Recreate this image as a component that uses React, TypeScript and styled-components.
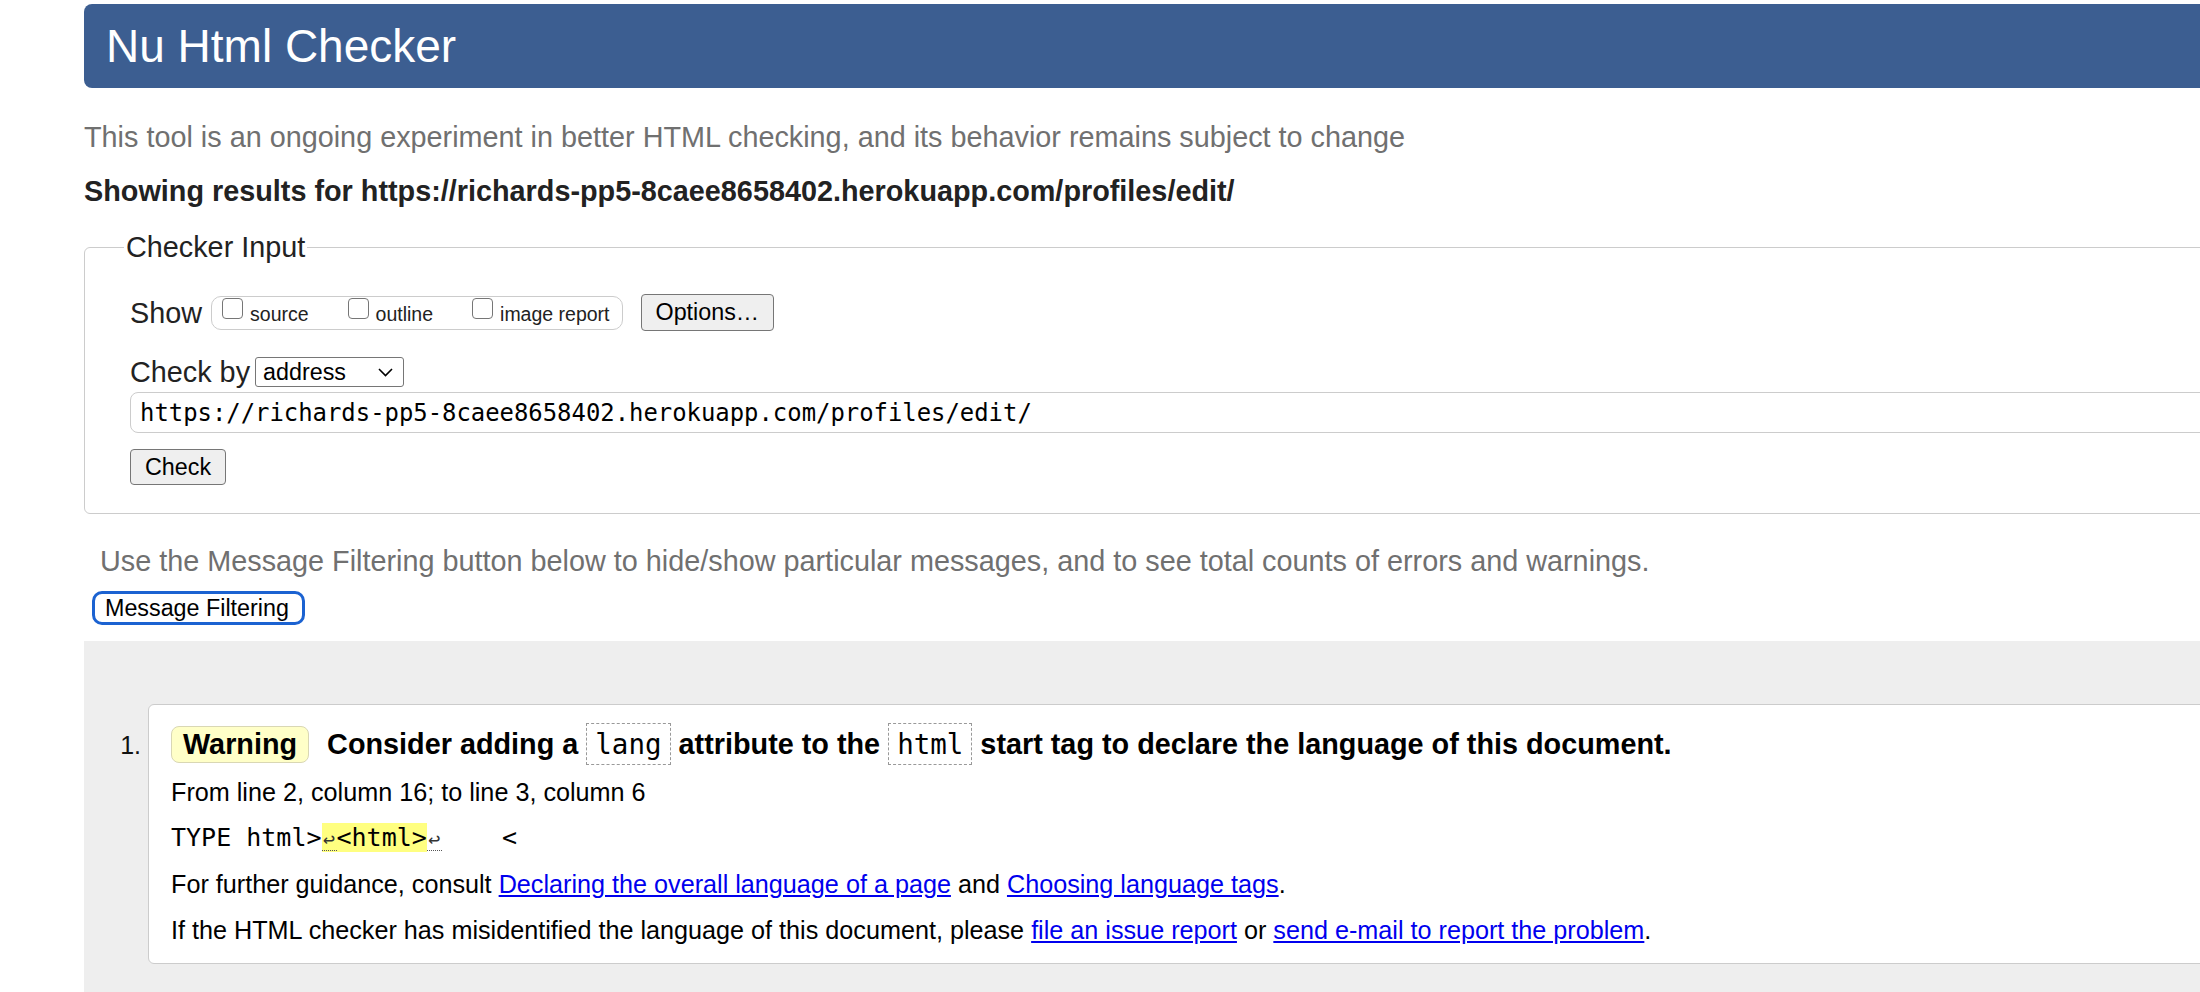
import React from "react";
import styled, { createGlobalStyle } from "styled-components";

const GlobalStyle = createGlobalStyle`
  html, body {
    margin: 0;
    padding: 0;
    overflow: hidden;
    background: #ffffff;
  }
  body {
    font-family: "Liberation Sans", Arial, Helvetica, sans-serif;
    color: #222222;
  }
`;

const SANS = `"Liberation Sans", Arial, Helvetica, sans-serif`;
const MONO = `"DejaVu Sans Mono", Menlo, "Liberation Mono", monospace`;

const Page = styled.div`
  width: 2400px;
  box-sizing: border-box;
  padding: 4px 0 0 84px;
`;

const Header = styled.header`
  height: 84px;
  box-sizing: border-box;
  background: #3c5e91;
  border-radius: 8px;
  display: flex;
  align-items: center;
  padding-left: 22px;
`;

const Title = styled.h1`
  margin: 0;
  font-family: ${SANS};
  font-size: 46px;
  line-height: 46px;
  font-weight: normal;
  color: #ffffff;
`;

const Lead = styled.p<{ $mt: number; $ml?: number }>`
  margin: ${(p) => p.$mt}px 0 0 ${(p) => p.$ml ?? 0}px;
  font-size: 28.8px;
  line-height: 36px;
  color: #707070;
`;

const ResultsFor = styled.h2`
  margin: 18px 0 0;
  font-size: 28.8px;
  line-height: 36px;
  font-weight: bold;
  color: #222222;
`;

const Fieldset = styled.fieldset`
  margin: 20px 0 0;
  border: 1px solid #cccccc;
  border-radius: 6px;
  padding: 29px 0 28px 45px;
  min-width: 0;
`;

const Legend = styled.legend`
  font-size: 28.8px;
  line-height: 36px;
  padding: 0 2px;
  margin-left: -6px;
  color: #222222;
`;

const Row = styled.div<{ $mt?: number }>`
  display: flex;
  align-items: center;
  height: ${(p) => (p.$mt ? 36 : 37)}px;
  margin-top: ${(p) => p.$mt ?? 0}px;
`;

const RowLabel = styled.span`
  font-size: 28.8px;
  line-height: 36px;
  color: #222222;
`;

const CheckGroup = styled.div`
  display: flex;
  align-items: flex-start;
  box-sizing: border-box;
  height: 34px;
  margin-left: 9px;
  padding: 1px 12px 0 10px;
  border: 1px solid #cccccc;
  border-radius: 10px;
  gap: 39px;
`;

const CheckItem = styled.label`
  display: flex;
  align-items: flex-start;
  gap: 7px;
`;

const Box = styled.input`
  appearance: none;
  -webkit-appearance: none;
  width: 21px;
  height: 21px;
  margin: 0;
  box-sizing: border-box;
  border: 1.5px solid #767676;
  border-radius: 4px;
  background: #ffffff;
`;

const CheckText = styled.span`
  font-size: 19.5px;
  line-height: 24px;
  padding-top: 4px;
  color: #222222;
`;

const Button = styled.button<{ $h: number; $ml?: number; $mt?: number }>`
  display: block;
  height: ${(p) => p.$h}px;
  margin: ${(p) => p.$mt ?? 0}px 0 0 ${(p) => p.$ml ?? 0}px;
  padding: 0 14px;
  box-sizing: border-box;
  font-family: ${SANS};
  font-size: 23.3px;
  color: #000000;
  background: #efefef;
  border: 1px solid #767676;
  border-radius: 4px;
`;

const SelectWrap = styled.div`
  position: relative;
  margin-left: 5px;
  width: 149px;
  height: 30px;
`;

const Select = styled.select`
  appearance: none;
  -webkit-appearance: none;
  width: 149px;
  height: 30px;
  box-sizing: border-box;
  padding: 0 0 0 7px;
  font-family: ${SANS};
  font-size: 23.3px;
  color: #000000;
  background: #ffffff;
  border: 1px solid #767676;
  border-radius: 3px;
`;

const Chevron = styled.svg`
  position: absolute;
  right: 11px;
  top: 11px;
  pointer-events: none;
`;

const UrlInput = styled.input`
  display: block;
  width: 100%;
  height: 41px;
  margin-top: 2px;
  box-sizing: border-box;
  padding: 0 9px;
  font-family: ${MONO};
  font-size: 23.9px;
  color: #000000;
  border: 1px solid #cccccc;
  border-radius: 8px;
  background: #ffffff;
`;

const FilterButton = styled.button`
  display: block;
  height: 34px;
  margin: 12px 0 0 8px;
  padding: 0 13px 0 10px;
  box-sizing: border-box;
  font-family: ${SANS};
  font-size: 23.3px;
  color: #000000;
  background: #ffffff;
  border: 3px solid #1b62d1;
  border-radius: 10px;
`;

const Results = styled.div`
  margin-top: 16px;
  background: #eeeeee;
  padding: 63px 0 200px 64px;
`;

const List = styled.ol`
  margin: 0;
  padding: 0;
  list-style: decimal outside;
`;

const Message = styled.li`
  background: #ffffff;
  border: 1px solid #cccccc;
  border-radius: 6px;
  padding: 17px 0 18px 22px;
  font-size: 25.2px;
  color: #000000;

  &::marker {
    font-size: 25px;
    color: #111111;
  }
`;

const MessageTitle = styled.p`
  margin: 0;
  font-size: 28.8px;
  line-height: 44px;
  font-weight: bold;
  color: #000000;
`;

const Badge = styled.span`
  display: inline-block;
  line-height: 35px;
  padding: 0 11px;
  margin-right: 10px;
  border: 1px solid #d9d7b4;
  border-radius: 8px;
  background: #ffffc8;
`;

const Code = styled.code`
  display: inline-block;
  font-family: ${MONO};
  font-size: 27.5px;
  font-weight: normal;
  line-height: 40px;
  padding: 0 8px;
  border: 1px dashed #999999;
`;

const Detail = styled.p<{ $mt: number }>`
  margin: ${(p) => p.$mt}px 0 0;
  font-size: 25.2px;
  line-height: 30px;
`;

const Extract = styled.p`
  margin: 16px 0 0;
  font-family: ${MONO};
  font-size: 25px;
  line-height: 30px;
  white-space: pre;
`;

const Highlight = styled.mark`
  background: #ffff80;
  color: #000000;
`;

const Newline = styled.span`
  display: inline-block;
  width: 15px;
  text-align: center;
  font-size: 20px;
  line-height: 22px;
  color: #333333;
  border-bottom: 1px dotted #555555;
`;

const Link = styled.a`
  color: #0000ee;
  text-decoration: underline;
`;

export default function App() {
  return (
    <>
      <GlobalStyle />
      <Page>
        <Header>
          <Title>Nu Html Checker</Title>
        </Header>
        <Lead $mt={31}>
          This tool is an ongoing experiment in better HTML checking, and its behavior remains subject to change
        </Lead>
        <ResultsFor>
          Showing results for https://richards-pp5-8caee8658402.herokuapp.com/profiles/edit/
        </ResultsFor>
        <Fieldset>
          <Legend>Checker Input</Legend>
          <Row>
            <RowLabel>Show</RowLabel>
            <CheckGroup>
              <CheckItem>
                <Box type="checkbox" />
                <CheckText>source</CheckText>
              </CheckItem>
              <CheckItem>
                <Box type="checkbox" />
                <CheckText>outline</CheckText>
              </CheckItem>
              <CheckItem>
                <Box type="checkbox" />
                <CheckText>image report</CheckText>
              </CheckItem>
            </CheckGroup>
            <Button type="button" $h={37} $ml={18}>
              Options…
            </Button>
          </Row>
          <Row $mt={23}>
            <RowLabel>Check by</RowLabel>
            <SelectWrap>
              <Select defaultValue="address">
                <option value="address">address</option>
                <option value="file">file upload</option>
                <option value="text">text input</option>
              </Select>
              <Chevron width="15" height="9" viewBox="0 0 15 9">
                <path d="M1 1 L7.5 7.5 L14 1" fill="none" stroke="#000" strokeWidth="1.6" />
              </Chevron>
            </SelectWrap>
          </Row>
          <UrlInput
            type="text"
            readOnly
            value="https://richards-pp5-8caee8658402.herokuapp.com/profiles/edit/"
          />
          <Button type="button" $h={36} $mt={16}>
            Check
          </Button>
        </Fieldset>
        <Lead $mt={29} $ml={16}>
          Use the Message Filtering button below to hide/show particular messages, and to see total counts of errors and warnings.
        </Lead>
        <FilterButton type="button">Message Filtering</FilterButton>
        <Results>
          <List>
            <Message>
              <MessageTitle>
                <Badge>Warning</Badge> Consider adding a <Code>lang</Code> attribute to the <Code>html</Code> start
                tag to declare the language of this document.
              </MessageTitle>
              <Detail $mt={11}>From line 2, column 16; to line 3, column 6</Detail>
              <Extract>
                {"TYPE html>"}
                <Highlight>
                  <Newline>↩</Newline>
                  {"<html>"}
                </Highlight>
                <Newline>↩</Newline>
                {"    <"}
              </Extract>
              <Detail $mt={16}>
                For further guidance, consult <Link href="#">Declaring the overall language of a page</Link> and{" "}
                <Link href="#">Choosing language tags</Link>.
              </Detail>
              <Detail $mt={16}>
                If the HTML checker has misidentified the language of this document, please{" "}
                <Link href="#">file an issue report</Link> or <Link href="#">send e-mail to report the problem</Link>.
              </Detail>
            </Message>
          </List>
        </Results>
      </Page>
    </>
  );
}
